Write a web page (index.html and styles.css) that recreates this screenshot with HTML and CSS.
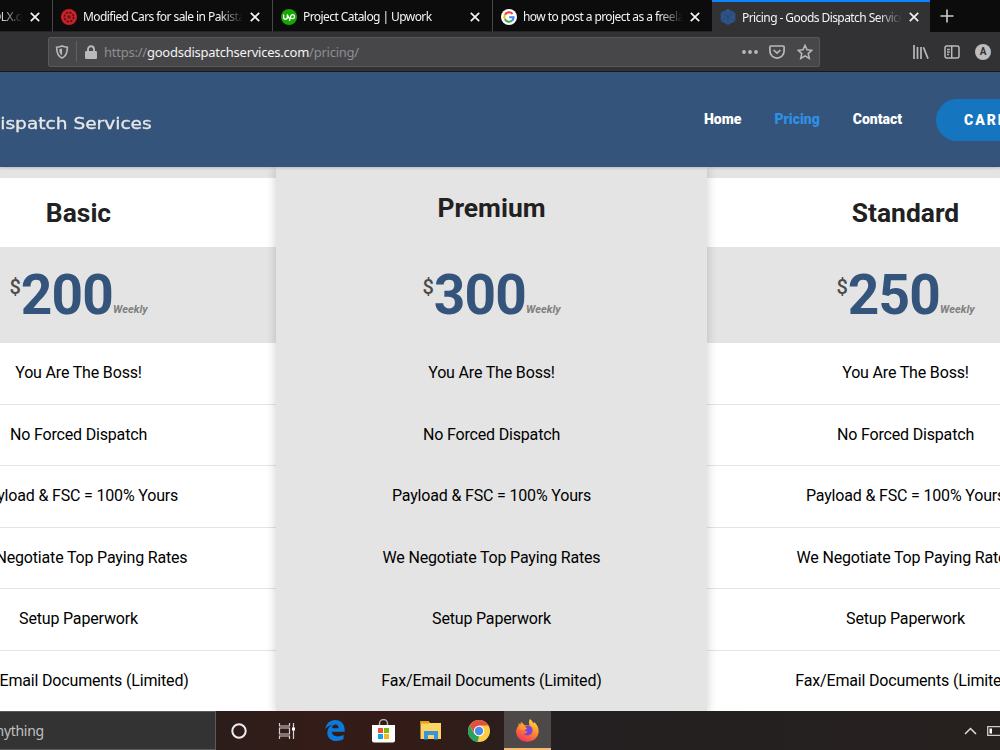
FILE: index.html
```html
<!DOCTYPE html>
<html>

<head>
    <meta charset="utf-8">
    <title>Pricing - Goods Dispatch Services</title>
    <link rel="stylesheet" href="styles.css">
</head>

<body>
    <!-- tabs -->
    <div class="tabs">
        <div class="tab tab-first">
            <span class="tab-title">OLX.com</span>
            <svg class="close" viewBox="0 0 10 10"><path d="M.8.8l8.4 8.4M9.2.8L.8 9.2"/></svg>
        </div>
        <div class="tab">
            <svg class="favicon" viewBox="0 0 16 16"><circle cx="8" cy="8" r="8" fill="#c92127"/><circle cx="8" cy="8" r="4.6" fill="none" stroke="#4d1012" stroke-width="1.6" stroke-dasharray="2.2 1.4"/><circle cx="8" cy="8" r="1.7" fill="#6b1518"/></svg>
            <span class="tab-title">Modified Cars for sale in Pakistan</span>
            <svg class="close" viewBox="0 0 10 10"><path d="M.8.8l8.4 8.4M9.2.8L.8 9.2"/></svg>
        </div>
        <div class="tab">
            <svg class="favicon" viewBox="0 0 16 16"><circle cx="8" cy="8" r="8" fill="#14a800"/><path d="M2.6 5.5v2.7c0 2.7 3.7 2.7 3.7 0V5.5c.8 2.3 1.7 3.700 2.600 4.600M8.400 12l1.300-4.700c.9-2.700 4.100-1.900 3.800.5-.3 2.300-2.800 2.300-4.500.7" fill="none" stroke="#fff" stroke-width="1.300"/></svg>
            <span class="tab-title">Project Catalog | Upwork</span>
            <svg class="close" viewBox="0 0 10 10"><path d="M.8.8l8.4 8.4M9.2.8L.8 9.2"/></svg>
        </div>
        <div class="tab">
            <svg class="favicon" viewBox="0 0 16 16"><circle cx="8" cy="8" r="8" fill="#fff"/><g fill="none" stroke-width="2"><path d="M11.6 4.8A4.7 4.7 0 0 0 3.9 5.8" stroke="#ea4335"/><path d="M3.9 5.8a4.7 4.7 0 0 0 0 4.5" stroke="#fbbc05"/><path d="M3.9 10.3a4.7 4.7 0 0 0 7.2 1.3" stroke="#34a853"/><path d="M11.1 11.6a4.7 4.7 0 0 0 1.5-3.4H8.2" stroke="#4285f4"/></g></svg>
            <span class="tab-title">how to post a project as a freelancer</span>
            <svg class="close" viewBox="0 0 10 10"><path d="M.8.8l8.4 8.4M9.2.8L.8 9.2"/></svg>
        </div>
        <div class="tab active">
            <svg class="favicon" viewBox="0 0 16 16"><path d="M8 0l7.3 3.8v8.2L8 16 .7 12V3.8z" fill="#2f5488"/><path d="M1 4l7 4 7-4M8 8v7.500M4.500 2L8 8l3.500-6M1 11.500L8 8l7 3.500" fill="none" stroke="#24457a" stroke-width=".7"/></svg>
            <span class="tab-title">Pricing - Goods Dispatch Services</span>
            <svg class="close" viewBox="0 0 10 10"><path d="M.8.8l8.4 8.4M9.2.8L.8 9.2"/></svg>
        </div>
        <svg class="new-tab" viewBox="0 0 14 14"><path d="M7 .5v13M.5 7h13"/></svg>
    </div>

    <!-- address bar -->
    <div class="toolbar">
        <div class="urlbar">
            <svg class="shield" viewBox="0 0 14 14"><path d="M7 .9c2 .9 3.600 1.100 5.400 1.300 0 5.400-1 8.800-5.400 10.900C2.600 11 1.600 7.600 1.600 2.200 3.400 2 5 1.800 7 .9z" fill="none" stroke="#b9b9ba" stroke-width="1.600"/><path d="M7 3.600v6.800C5 9 4.300 7.200 4.200 4.200z" fill="#b9b9ba"/></svg>
            <span class="divider"></span>
            <svg class="lock" viewBox="0 0 12 14"><path d="M3 7V4.200a3 3 0 0 1 6 0V7" fill="none" stroke="#b9b9ba" stroke-width="1.900"/><rect y="6" width="12" height="8" rx="1.200" fill="#b9b9ba"/></svg>
            <span class="url">https://<b>goodsdispatchservices.com</b>/pricing/</span>
            <svg class="dots" viewBox="0 0 16 4"><circle cx="2" cy="2" r="1.900"/><circle cx="8" cy="2" r="1.900"/><circle cx="14" cy="2" r="1.900"/></svg>
            <svg class="pocket" viewBox="0 0 16 14"><path d="M1.800 1h12.400a.9.9 0 0 1 .9.9V6a7.100 7.100 0 0 1-14.200 0V1.900a.9.9 0 0 1 .9-.9zM4.600 5L8 8.200 11.400 5"/></svg>
            <svg class="star" viewBox="0 0 16 16"><path d="M8 1.300l2 4.500 4.900.5-3.700 3.300 1.100 4.800L8 11.900l-4.300 2.500 1.100-4.800L1.100 6.300 6 5.800z"/></svg>
        </div>
        <svg class="library" viewBox="0 0 16 14"><path d="M1 0v14M4.500 2v12M8 2v12M10.400 2.200L15 13.600"/></svg>
        <svg class="sidebar" viewBox="0 0 16 14"><rect x="1" y="1" width="14" height="12" rx="2"/><path d="M7.700 1v12M3 4.500h2.800M3 7h2.800M3 9.500h2"/></svg>
        <span class="account">A</span>
    </div>

    <!-- page -->
    <div class="page">
        <header class="header">
            <a class="logo">Dispatch Services</a>
            <nav>
                <a>Home</a>
                <a class="selected">Pricing</a>
                <a>Contact</a>
            </nav>
            <a class="carrier">CARRIER</a>
        </header>

        <div class="plans">
            <div class="plan">
                <h2>Basic</h2>
                <div class="price"><sup>$</sup><strong>200</strong><em>Weekly</em></div>
                <ul>
                    <li>You Are The Boss!</li>
                    <li>No Forced Dispatch</li>
                    <li>Payload &amp; FSC = 100% Yours</li>
                    <li>We Negotiate Top Paying Rates</li>
                    <li>Setup Paperwork</li>
                    <li>Fax/Email Documents (Limited)</li>
                </ul>
            </div>
            <div class="plan premium">
                <h2>Premium</h2>
                <div class="price"><sup>$</sup><strong>300</strong><em>Weekly</em></div>
                <ul>
                    <li>You Are The Boss!</li>
                    <li>No Forced Dispatch</li>
                    <li>Payload &amp; FSC = 100% Yours</li>
                    <li>We Negotiate Top Paying Rates</li>
                    <li>Setup Paperwork</li>
                    <li>Fax/Email Documents (Limited)</li>
                </ul>
            </div>
            <div class="plan">
                <h2>Standard</h2>
                <div class="price"><sup>$</sup><strong>250</strong><em>Weekly</em></div>
                <ul>
                    <li>You Are The Boss!</li>
                    <li>No Forced Dispatch</li>
                    <li>Payload &amp; FSC = 100% Yours</li>
                    <li>We Negotiate Top Paying Rates</li>
                    <li>Setup Paperwork</li>
                    <li>Fax/Email Documents (Limited)</li>
                </ul>
            </div>
        </div>
    </div>

    <!-- taskbar -->
    <div class="taskbar">
        <div class="search">anything</div>
        <div class="app"><svg width="16" height="16" viewBox="0 0 16 16"><circle cx="8" cy="8" r="6.700" fill="none" stroke="#eee" stroke-width="2"/></svg></div>
        <div class="app"><svg width="18" height="16" viewBox="0 0 18 16"><path d="M1.500 0v3h10V0M1.500 16v-3h10v3M1.500 5h10v6h-10zM15.500 0v16" fill="none" stroke="#d5d0cf" stroke-width="1.200"/><path d="M14 4.500h3v3h-3z" fill="#fff"/></svg></div>
        <div class="app"><svg width="20" height="21" viewBox="0 0 20 21"><path d="M.3 9.300C1 3.500 5 0 10.200 0 16 0 19.700 4 19.700 9.700v2.100H6.800c.2 3 2.700 4.600 5.900 4.600 2 0 4-.6 5.900-1.700v4.400c-2 1.200-4.400 1.900-7.300 1.900-5.400 0-9-3.200-9-8.300 0-3.400 2-6.300 5-7.600C4 5.700 1.700 7 .3 9.300zm6.600-1.100h6.700c0-2.400-1.200-3.700-3.200-3.700-1.900 0-3.200 1.500-3.500 3.700z" fill="#0a7bdb"/></svg></div>
        <div class="app"><svg width="23" height="24" viewBox="0 0 23 24"><path d="M7.500 7V4.500a4 4 0 0 1 8 0V7" fill="none" stroke="#b6b2b1" stroke-width="1.400"/><path d="M0 6h23v15.500a2 2 0 0 1-2 2H2a2 2 0 0 1-2-2z" fill="#fff"/><path d="M6 9h5v5H6z" fill="#f0502a"/><path d="M12 9h5v5h-5z" fill="#7db90a"/><path d="M6 15h5v5H6z" fill="#0fa3e8"/><path d="M12 15h5v5h-5z" fill="#fcb714"/></svg></div>
        <div class="app"><svg width="22" height="19" viewBox="0 0 22 19"><path d="M.5 0h8l1.500 2h11v16H.5z" fill="#fcd462"/><path d="M.5 0h8l1 2.500h-9z" fill="#e6a010"/><path d="M4 18.500V10h14v8.500h-4V14H8v4.500z" fill="#3a94dc"/></svg></div>
        <div class="app"><svg width="22" height="22" viewBox="0 0 22 22"><circle cx="11" cy="11" r="11" fill="#fccd45"/><path d="M1.500 5.500a11 11 0 0 1 19 0H11L6.500 13.500z" fill="#df5145"/><path d="M1.500 5.500l4.700 8.200L11 16.500 9.500 22A11 11 0 0 1 1.500 5.500z" fill="#27a35f"/><circle cx="11" cy="11" r="5.200" fill="#fff"/><circle cx="11" cy="11" r="4.200" fill="#4a8be8"/></svg></div>
        <div class="app current"><svg width="23" height="23" viewBox="0 0 23 23">
            <defs><linearGradient id="fox" x1=".8" y1="0" x2=".3" y2="1"><stop offset="0" stop-color="#ffe14a"/><stop offset=".45" stop-color="#ff8f2b"/><stop offset="1" stop-color="#f5315c"/></linearGradient></defs>
            <path d="M14 0c2 1.500 3 3 3.200 4.500l.9-1.500C24 7.500 24 16 19 20c-5 4-12 3.500-16-.5C-.5 16-1 10.500 2.500 6.500V4l2.300 2 .6-3 3.200 3.200 5 .3C12.500 4 13 1.500 14 0z" fill="url(#fox)"/><path d="M9 7.500c5-2 8 1 7.500 4.500-.5 4-5 6-9 3 2 0 3.500-1 4-2.500-2 0-3.500-1-3-2.500l2-.8z" fill="#7a43d8"/><path d="M5 3l3.600 3.200-.6 2 3 .8c-.5 1.500-1.500 1.500-2.500 2L3 10z" fill="#ff982e"/></svg></div>
        <div class="tray">
            <svg width="13" height="8" viewBox="0 0 13 8"><path d="M1 7l5.500-5.500L12 7" fill="none" stroke="#ddd" stroke-width="1.500"/></svg>
            <svg width="22" height="10" viewBox="0 0 22 10"><path d="M.7.7h20v8.600H.7z" fill="none" stroke="#ccc" stroke-width="1.300"/><path d="M2.500 2.500H5v5H2.500z" fill="#fff"/></svg>
        </div>
    </div>
</body>

</html>
```
FILE: styles.css
```css
body {
    margin: 0;
    width: 1000px;
    height: 750px;
    overflow: hidden;
    display: flex;
    flex-direction: column;
    font-family: Roboto, Arial, sans-serif;
    background-color: #e4e4e4;
}

svg {
    flex: none;
    display: block;
}

/* TABS */

.tabs {
    flex: none;
    height: 32px;
    display: flex;
    background-color: #0c0c0d;
    font: 12px "Noto Sans", sans-serif;
    color: #f3f3f4;
}

.tab {
    flex: none;
    width: 220px;
    height: 32px;
    padding: 2px 12px 0 8px;
    box-sizing: border-box;
    display: flex;
    align-items: center;
    border-right: 1px solid #48484b;
    border-bottom: 1px solid #252527;
}

.tab-first {
    width: 53px;
    padding-left: 0;
}

.tab-first .tab-title {
    margin-left: -8px;
}

.tab:nth-child(4) {
    width: 219px;
    border-right: none;
}

.tab.active {
    width: 218px;
    padding-top: 0;
    padding-right: 11px;
    background-color: #323234;
    border-top: 2px solid #0a84ff;
    border-right: none;
    border-bottom: none;
}

.favicon {
    width: 16px;
    height: 16px;
    margin-right: 6px;
}

.tab-title {
    flex: 1;
    min-width: 0;
    overflow: hidden;
    white-space: nowrap;
    letter-spacing: -0.57px;
    margin-right: 7px;
    -webkit-mask-image: linear-gradient(to left, transparent, #000 24px);
    mask-image: linear-gradient(to left, transparent, #000 24px);
}

.close {
    width: 10px;
    height: 10px;
}

.close path {
    stroke: #f3f3f4;
    stroke-width: 1.7;
}

.new-tab {
    width: 14px;
    height: 14px;
    margin: 9px 0 0 10px;
}

.new-tab path {
    stroke: #ccc;
    stroke-width: 1.6;
}

/* ADDRESS BAR */

.toolbar {
    flex: none;
    height: 40px;
    box-sizing: border-box;
    padding: 5px 0 5px 48px;
    display: flex;
    align-items: center;
    background-color: #323234;
    border-bottom: 1px solid #17181b;
}

.urlbar {
    width: 772px;
    height: 30px;
    box-sizing: border-box;
    padding: 0 6px 0 6px;
    display: flex;
    align-items: center;
    background-color: #474749;
    border: 1px solid #59595b;
    border-radius: 2px;
}

.shield {
    width: 14px;
    height: 14px;
}

.divider {
    width: 1px;
    height: 21px;
    margin: 0 8px 0 7px;
    background-color: #606062;
}

.lock {
    width: 12px;
    height: 14px;
}

.url {
    flex: 1;
    margin-left: 7px;
    padding-top: 1px;
    font: 13px "Noto Sans", sans-serif;
    letter-spacing: -0.24px;
    color: #8e8e91;
    white-space: nowrap;
}

.url b {
    font-weight: normal;
    color: #f3f3f4;
}

.dots {
    width: 16px;
    height: 4px;
    fill: #b9b9ba;
}

.pocket,
.star,
.library,
.sidebar {
    width: 16px;
    height: 14px;
    fill: none;
    stroke: #b9b9ba;
    stroke-width: 1.7;
}

.pocket {
    margin: 0 12px 0 11px;
}

.star {
    height: 16px;
    stroke-width: 1.5;
}

.library {
    margin-left: 93px;
}

.sidebar {
    margin: 0 15px;
    stroke-width: 1.5;
}

.account {
    flex: none;
    width: 16px;
    height: 16px;
    border-radius: 50%;
    background-color: #bdbdbe;
    color: #323234;
    font: bold 10px/16px Roboto, sans-serif;
    text-align: center;
}

/* HEADER */

.page {
    flex: 1;
    min-height: 0;
    overflow: hidden;
    display: flex;
    flex-direction: column;
    background-color: #e4e4e4;
}

.header {
    flex: none;
    z-index: 2;
    height: 95px;
    display: flex;
    align-items: center;
    background-color: #34547b;
    box-shadow: 0 1px 3px rgba(0, 0, 0, 0.2);
    color: #fff;
}

.logo {
    flex: none;
    width: 718px;
    margin-left: -14px;
    padding-top: 7px;
    font: 16px "DejaVu Sans", sans-serif;
    color: #e8e8e8;
    /* wide lettering */
    transform: scaleX(1.16);
    transform-origin: left;
    -webkit-text-stroke: 0.3px #e8e8e8;
}

.header nav {
    flex: none;
    width: 232px;
    padding-bottom: 1px;
    display: flex;
    gap: 33px;
    font-size: 14px;
    font-weight: 900;
}

.header nav .selected {
    color: #2f8fe4;
}

.carrier {
    flex: none;
    width: 130px;
    height: 42px;
    box-sizing: border-box;
    padding-left: 28px;
    border-radius: 21px;
    background-color: #1675bf;
    font-size: 14px;
    line-height: 42px;
    font-weight: 900;
    letter-spacing: 2px;
}

/* PLANS */

.plans {
    flex: none;
    display: flex;
    align-items: flex-start;
    margin-left: -119px;
}

.plan {
    flex: none;
    width: 395px;
    margin-top: 11px;
    background-color: #fff;
    text-align: center;
}

.plan:last-child {
    width: 397px;
}

.plan h2 {
    margin: 0;
    height: 69px;
    font-size: 26.4px;
    line-height: 70px;
    font-weight: 700;
    color: #212121;
}

.price {
    height: 96px;
    display: flex;
    justify-content: center;
    align-items: flex-start;
    background-color: #e4e4e4;
}

.price sup {
    margin-top: 28px;
    font-size: 20px;
    line-height: 24px;
    font-weight: 500;
    color: #4b4b4b;
}

.price strong {
    margin-top: 17px;
    font-size: 55px;
    line-height: 62px;
    letter-spacing: -0.8px;
    color: #34547b;
}

.price em {
    margin-top: 55px;
    font-size: 11px;
    line-height: 16px;
    font-weight: 700;
    color: #808080;
}

.plan ul {
    margin: 0;
    padding: 0;
    list-style: none;
}

.plan li {
    height: 61.6px;
    box-sizing: border-box;
    border-bottom: 1px solid #e4e4e4;
    font-size: 16px;
    line-height: 60px;
    letter-spacing: -0.17px;
    color: #000;
}

.premium {
    z-index: 1;
    width: 431px;
    margin-top: 0;
    padding-top: 6px;
    background-color: #e4e4e4;
    box-shadow: 0 0 10px rgba(0, 0, 0, 0.2);
}

.premium h2 {
    height: 74px;
}

/* TASKBAR */

.taskbar {
    flex: none;
    height: 39px;
    display: flex;
    background: linear-gradient(to right, #2b1d1b 215px, #341c18 310px, #321c18 440px, #242021 560px, #26211f 1000px);
}

.search {
    width: 216px;
    margin-right: -1px;
    box-sizing: border-box;
    border: 1px solid #5a5a5a;
    border-left: none;
    background-color: #333;
    font: 14px/38px "Noto Sans", sans-serif;
    letter-spacing: -0.3px;
    color: #c0c0c0;
    text-indent: -12px;
}

.app {
    width: 48px;
    display: flex;
    align-items: center;
    justify-content: center;
}

.app.current {
    width: 47px;
    margin-left: 1px;
    box-sizing: border-box;
    padding-top: 2px;
    background-color: #4d4949;
    border-bottom: 2px solid #f6b873;
}

.tray {
    flex: none;
    margin-left: auto;
    margin-right: -9px;
    display: flex;
    align-items: center;
    gap: 10px;
}
```
